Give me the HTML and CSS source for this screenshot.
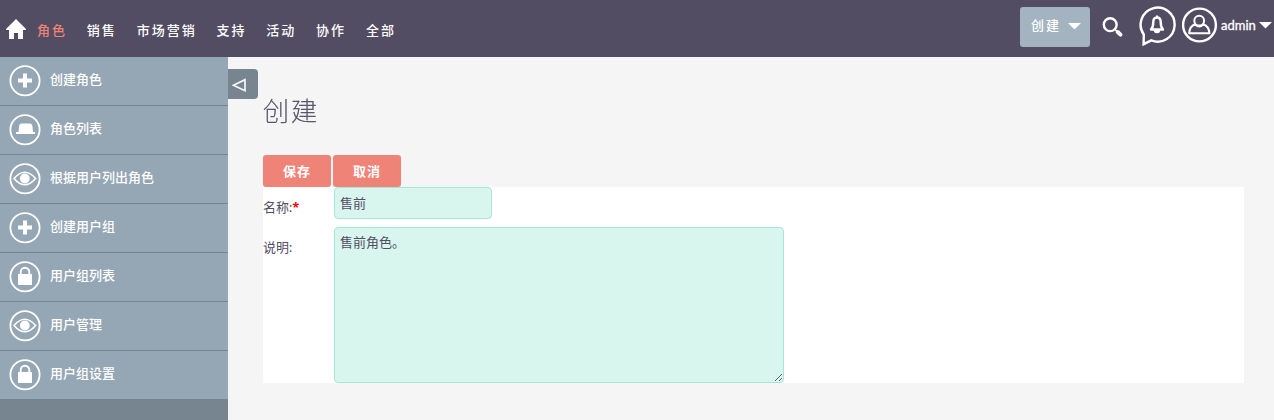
FILE: index.html
```
<!DOCTYPE html>
<html lang="zh-CN">
<head>
<meta charset="utf-8">
<title>创建角色</title>
<link rel="stylesheet" href="styles.css">
</head>
<body>
<svg class="defs" aria-hidden="true">
  <symbol id="plus" viewBox="0 0 32 32"><circle cx="16" cy="15.700" r="14.6" fill="none" stroke="#fff" stroke-width="1.8"/><path d="M9 15.500h14M16 8.500v14" stroke="#fff" stroke-width="4"/></symbol>
  <symbol id="hat" viewBox="0 0 32 32"><circle cx="16" cy="15.700" r="14.6" fill="none" stroke="#fff" stroke-width="1.8"/><path d="M9.500 18L10 12.500q.3-3 3-3h7.500q2.700 0 3 3L24 18H26V20H7v-2z" fill="#fff"/></symbol>
  <symbol id="eye" viewBox="0 0 32 32"><circle cx="16" cy="15.700" r="14.6" fill="none" stroke="#fff" stroke-width="1.8"/><path d="M5 15.500Q15.800 3 26.600 15.500Q15.800 28 5 15.500z" fill="none" stroke="#fff" stroke-width="1.700"/><circle cx="15.800" cy="15.500" r="4.900" fill="#fff"/></symbol>
  <symbol id="lock" viewBox="0 0 32 32"><circle cx="16" cy="15.700" r="14.6" fill="none" stroke="#fff" stroke-width="1.8"/><rect x="9" y="13" width="14" height="11" rx=".6" fill="#fff"/><path d="M11.700 14v-3a4.300 4.300 0 0 1 8.600 0v3" fill="none" stroke="#fff" stroke-width="1.900"/></symbol>
</svg>
<header class="topbar">
  <svg class="home" viewBox="0 0 20 20"><path d="M10 0L20 10V11H17V20H12V14H8V20H3V11H0V10z" fill="#fff"/></svg>
  <nav class="nav">
    <a class="active">角色</a><a>销售</a><a>市场营销</a><a>支持</a><a>活动</a><a>协作</a><a>全部</a>
  </nav>
  <div class="tools">
    <button class="quick">创建<svg class="caret" viewBox="0 0 12 6"><path d="M0 0h12L6 6z" fill="#fff"/></svg></button>
    <svg class="search" viewBox="0 0 22 22"><circle cx="8.200" cy="8.700" r="6.400" fill="none" stroke="#fff" stroke-width="2.400"/><path d="M12.800 13.300L15 15.500" stroke="#fff" stroke-width="1.600"/><path d="M15.700 16L18.500 18.600" stroke="#fff" stroke-width="4" stroke-linecap="round"/></svg>
    <svg class="bell" viewBox="0 0 38 42"><path d="M5.800 29.500A17 17 0 1 1 13.300 35.400L5.600 39.200z" fill="none" stroke="#fff" stroke-width="2.400"/><path d="M13 24.500Q15.300 22 15.300 17Q15.300 12.500 19 12.500Q22.700 12.500 22.700 17Q22.700 22 25 24.500z" fill="none" stroke="#fff" stroke-width="2.400" stroke-linejoin="round"/><path d="M15.700 25h6.600q0 3.200-3.300 3.200T15.700 25zM18 10.500h2v2h-2z" fill="#fff"/></svg>
    <svg class="user" viewBox="0 0 36 36"><g fill="none" stroke="#fff"><circle cx="17.500" cy="18" r="16.400" stroke-width="2.400"/><circle cx="17.200" cy="13.700" r="4.900" stroke-width="2"/><path d="M13 17.300Q7.500 19.300 7.200 26.300H27.500Q26.900 19.300 21.400 17.300Q17.200 21.800 13 17.300z" stroke-width="2" stroke-linejoin="round"/></g></svg>
    <span class="name">admin</span>
    <svg class="caret" viewBox="0 0 12 6"><path d="M0 0h12L6 6z" fill="#fff"/></svg>
  </div>
</header>
<div class="body">
  <aside class="sidebar">
    <a class="item"><svg><use href="#plus"/></svg><span>创建角色</span></a>
    <a class="item"><svg><use href="#hat"/></svg><span>角色列表</span></a>
    <a class="item"><svg><use href="#eye"/></svg><span>根据用户列出角色</span></a>
    <a class="item"><svg><use href="#plus"/></svg><span>创建用户组</span></a>
    <a class="item"><svg><use href="#lock"/></svg><span>用户组列表</span></a>
    <a class="item"><svg><use href="#eye"/></svg><span>用户管理</span></a>
    <a class="item"><svg><use href="#lock"/></svg><span>用户组设置</span></a>
  </aside>
  <div class="toggle"><svg viewBox="0 0 14 14"><path d="M1.500 7.200L13 1.700v11z" fill="none" stroke="#f5f5f5" stroke-width="1.700"/></svg></div>
  <main class="main">
    <h2 class="title">创建</h2>
    <div class="actions"><button class="btn">保存</button><button class="btn">取消</button></div>
    <form class="form">
      <label class="label">名称:<span class="required">*</span></label>
      <input class="field" type="text" value="售前">
      <label class="label">说明:</label>
      <textarea class="field area">售前角色。</textarea>
    </form>
  </main>
</div>
</body>
</html>
```
FILE: styles.css
```
* { box-sizing: border-box; }
body {
  margin: 0;
  height: 420px;
  overflow: hidden;
  background: #f5f5f5;
  color: #534d64;
  font: 13px/20px Lato, "Noto Sans CJK SC", sans-serif;
}
.defs { display: none; }
svg { display: block; flex: none; }
button { border: 0; padding: 0; font: inherit; color: #fff; }
.topbar {
  height: 57px;
  display: flex;
  align-items: flex-start;
  padding-left: 6px;
  background: #534d64;
  color: #fff;
}
.home { width: 20px; height: 20px; margin-top: 19px; }
.nav {
  display: flex;
  gap: 19.8px;
  margin: 20px 0 0 11px;
  letter-spacing: 2px;
  font-weight: 500;
}
.active { color: #f08377; }
.tools { display: flex; align-items: flex-start; margin-left: auto; }
.quick {
  display: flex;
  align-items: center;
  justify-content: space-between;
  width: 70px;
  height: 40px;
  margin-top: 7px;
  padding: 0 9px 4px 11px;
  border-radius: 3px;
  background: #a3b3bf;
  letter-spacing: 2px;
  font-weight: 500;
}
.caret { width: 13px; height: 6.5px; }
.quick .caret { margin-top: 2px; }
.search { width: 22px; height: 22px; margin: 16px 0 0 12px; }
.bell { width: 38px; height: 42px; margin: 5px 0 0 14px; }
.user { width: 36px; height: 36px; margin: 7px 0 0 6px; }
.name {
  margin: 15px 2px 0 3px;
  width: 36px;
  font-size: 13px;
  -webkit-text-stroke: 0.3px;
}
.tools > .caret { margin: 22px 2px 0 0; }
.body { display: flex; height: 363px; }
.sidebar { flex: none; width: 228px; background: #778591; }
.item {
  display: flex;
  height: 49px;
  padding: 8px 0 0 9px;
  border-bottom: 1px solid #778591;
  background: #95a6b4;
  color: #fff;
  font-weight: 500;
}
.item svg { width: 32px; height: 32px; }
.item span { margin: 4px 0 0 9px; }
.toggle {
  flex: none;
  width: 30px;
  height: 30px;
  margin-top: 12px;
  padding: 9px 0 0 4px;
  border-radius: 0 4px 4px 0;
  background: #778591;
}
.toggle svg { width: 14px; height: 14px; }
.main { flex: 1; padding: 38px 30px 0 5px; }
.title {
  margin: 0 0 28px;
  font-size: 26px;
  line-height: 32px;
  font-weight: 100;
  letter-spacing: 2px;
  -webkit-text-stroke: 0.4px;
  will-change: transform;
}
.actions { display: flex; gap: 2px; }
.btn {
  width: 68px;
  height: 32px;
  border-radius: 3px;
  background: #f08377;
  font-weight: 700;
  letter-spacing: 1px;
}
.form {
  display: grid;
  grid-template-columns: 71px 1fr;
  grid-template-rows: 32px 156px;
  row-gap: 8px;
  background: #fff;
}
.label { padding-top: 10px; }
.required { color: #f00; font: 700 13px/1 "Open Sans", sans-serif; }
.field {
  display: block;
  width: 158px;
  margin: 0;
  padding: 0 5px;
  border: 1px solid #a5e8d6;
  border-radius: 4px;
  background: #d8f5ee;
  color: #534d64;
  font: inherit;
  outline: 0;
}
.area { width: 450px; height: 156px; padding-top: 4px; resize: both; }
```
